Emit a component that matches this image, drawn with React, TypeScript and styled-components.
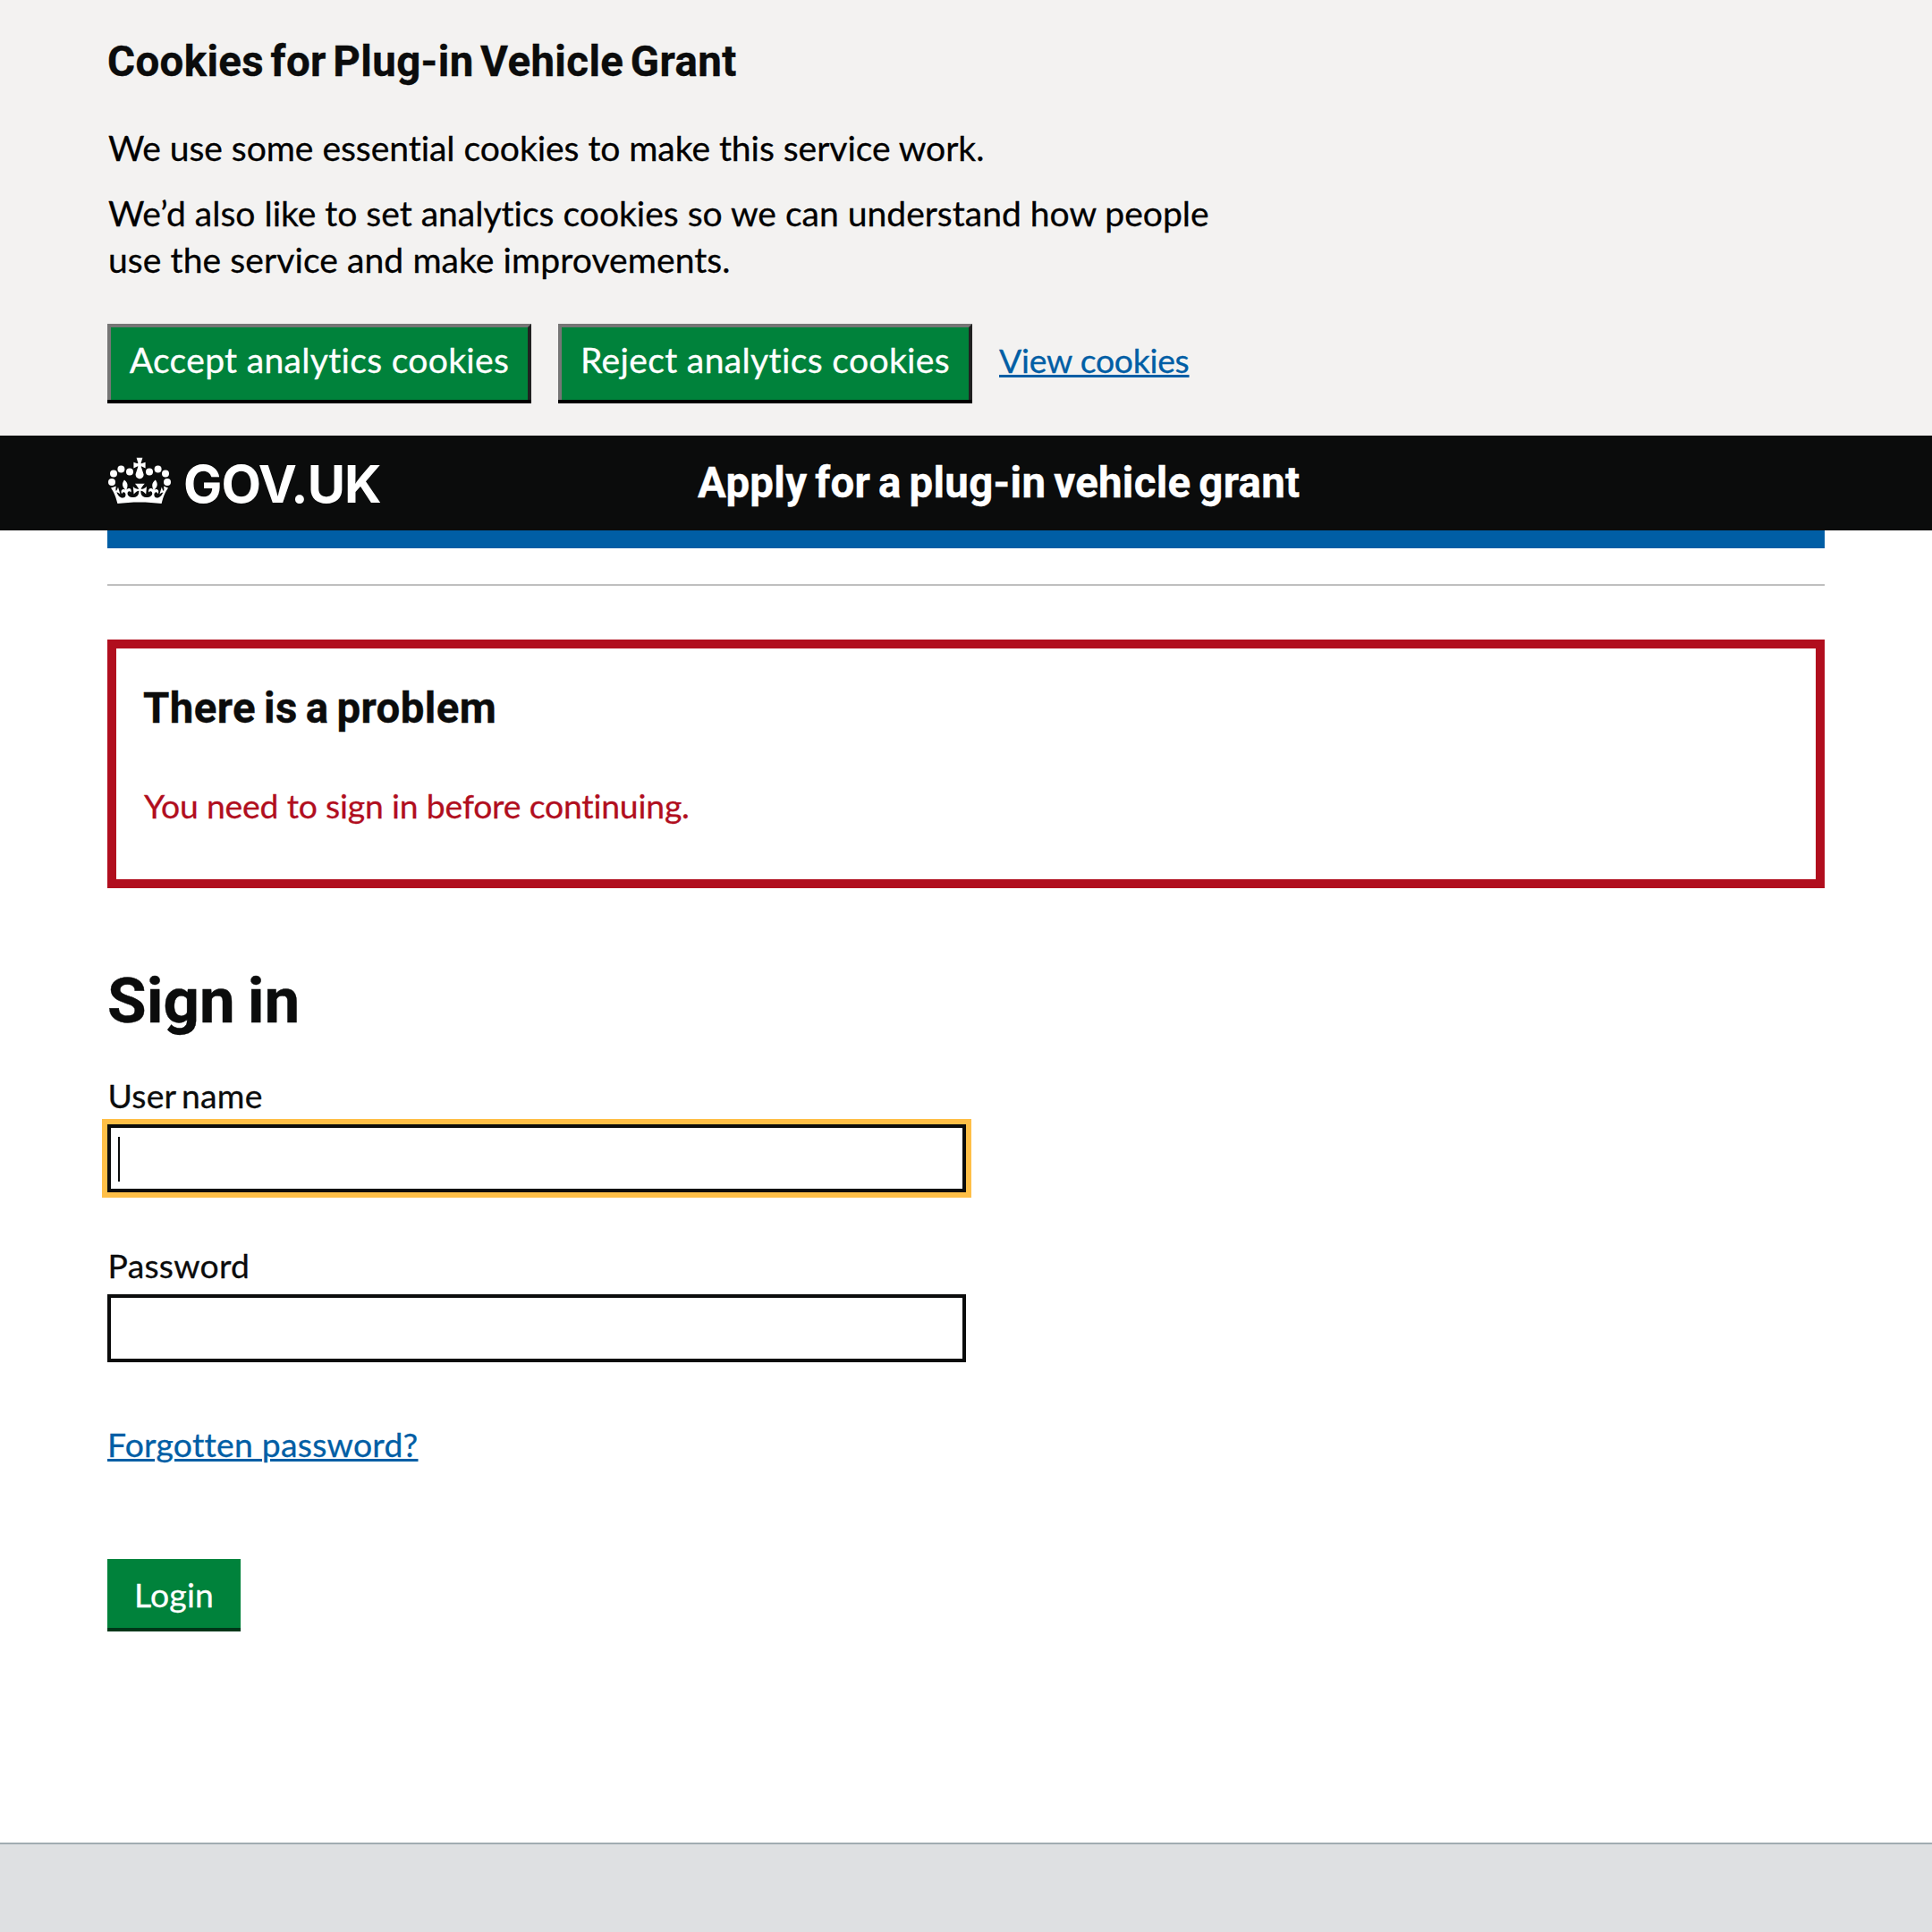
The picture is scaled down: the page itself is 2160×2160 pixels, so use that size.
import React from 'react';
import styled, { createGlobalStyle } from 'styled-components';

const ink = '#0b0c0c';
const blue = '#005ea5';
const green = '#00823b';
const red = '#b10e1e';

const GlobalStyle = createGlobalStyle`
  *, *::before, *::after { box-sizing: border-box; }
  body {
    margin: 0;
    background: #fff;
    color: ${ink};
    font-family: Lato, Arial, sans-serif;
    font-variant-ligatures: none;
  }
  h1, h2, p { margin: 0; }
`;

const Page = styled.div`
  display: flex;
  flex-direction: column;
  height: 2160px;
  overflow: hidden;
`;

const CookieBanner = styled.section`
  height: 487px;
  padding: 39px 120px 0;
  background: #f3f2f1;
`;

const Heading = styled.h2<{ $tracking: number; $wordGap: number }>`
  font: 700 47.4px/60px Roboto, sans-serif;
  letter-spacing: ${p => p.$tracking}px;
  word-spacing: ${p => p.$wordGap}px;
  -webkit-text-stroke: 0.4px currentColor;
`;

const CookieCopy = styled.div`
  display: flex;
  flex-direction: column;
  gap: 21px;
  width: 1270px;
  margin-top: 40px;
  padding-left: 1px;
  color: #000;
`;

const Paragraph = styled.p`
  font-size: 39.1px;
  line-height: 52px;
  -webkit-text-stroke: 0.3px currentColor;
`;

const Line = styled.span<{ $tracking: number }>`
  display: block;
  letter-spacing: ${p => p.$tracking}px;
`;

const CookieActions = styled.div`
  display: flex;
  align-items: flex-start;
  gap: 30px;
  margin-top: 46px;
`;

const CookieButton = styled.button<{ $width: number; $tracking: number }>`
  width: ${p => p.$width}px;
  height: 85px;
  padding: 0 0 9px;
  border: 4px solid;
  border-color: #767676 #212121 #000 #767676;
  border-bottom: 0;
  border-radius: 0;
  box-shadow: 0 4px 0 #000;
  background: ${green};
  color: #fff;
  font: 400 39.1px/52px Lato, sans-serif;
  letter-spacing: ${p => p.$tracking}px;
  white-space: nowrap;
  -webkit-text-stroke: 0.3px currentColor;
`;

const Link = styled.a<{ $tracking: number }>`
  color: ${blue};
  font-size: 37.3px;
  line-height: 51px;
  letter-spacing: ${p => p.$tracking}px;
  text-decoration: underline;
  text-decoration-thickness: 3px;
  text-underline-offset: 2px;
  -webkit-text-stroke: 0.3px currentColor;
`;

const ViewLink = styled(Link)`
  margin-top: 15px;
`;

const Header = styled.header`
  display: flex;
  align-items: flex-start;
  height: 106px;
  padding: 0 120px;
  background: ${ink};
  color: #fff;
`;

const Brand = styled.div`
  display: flex;
  gap: 13px;
  width: 660px;
  padding-top: 19px;
`;

const CrownSvg = styled.svg`
  flex: none;
  width: 72px;
  height: 52px;
  margin-top: 5px;
  fill: #fff;
`;

const BrandName = styled.span`
  font: 700 57.8px/70px Inter, sans-serif;
  letter-spacing: -0.95px;
`;

const ServiceName = styled(Heading)`
  margin-top: 23px;
`;

const Main = styled.main`
  flex: 1;
  margin: 0 120px;
`;

const BlueBar = styled.div`
  height: 20px;
  background: ${blue};
`;

const Divider = styled.div`
  height: 2px;
  margin-top: 40px;
  background: #bfbfbf;
`;

const ErrorSummary = styled.section`
  height: 278px;
  margin-top: 60px;
  padding: 37px 30px 0;
  border: 10px solid ${red};
`;

const ErrorText = styled.p`
  margin-top: 53px;
  padding-left: 1px;
  color: ${red};
  font-size: 37.3px;
  line-height: 51px;
  letter-spacing: -0.18px;
  -webkit-text-stroke: 0.3px currentColor;
`;

const Title = styled.h1`
  margin-top: 80px;
  font: 700 70.9px/91px Roboto, sans-serif;
  letter-spacing: 0px;
  word-spacing: -3.5px;
  -webkit-text-stroke: 0.4px currentColor;
`;

const Form = styled.form`
  display: flex;
  flex-direction: column;
  align-items: flex-start;
  padding-top: 35px;
`;

const Field = styled.div`
  display: flex;
  flex-direction: column;
  gap: 7px;
  width: 960px;
  margin-bottom: 56px;
`;

const Label = styled.label<{ $tracking: number; $wordGap?: number }>`
  font-size: 37.3px;
  line-height: 51px;
  letter-spacing: ${p => p.$tracking}px;
  word-spacing: ${p => p.$wordGap ?? 0}px;
  padding-left: 0.6px;
  -webkit-text-stroke: 0.3px currentColor;
`;

const Input = styled.div<{ $focused?: boolean }>`
  height: 76px;
  padding: 10px 8px;
  border: 4px solid ${ink};
  outline: ${p => (p.$focused ? '6px solid #ffbf47' : 'none')};
  background: #fff;
`;

const Caret = styled.div`
  width: 2px;
  height: 50px;
  background: ${ink};
`;

const ForgottenLink = styled(Link)`
  margin-top: 10px;
`;

const LoginButton = styled.button`
  width: 149px;
  height: 81px;
  margin-top: 103px;
  padding: 14px 0 12px 30px;
  border: 0;
  border-bottom: 4px solid #003618;
  background: ${green};
  color: #fff;
  font: 400 37.3px/51px Lato, sans-serif;
  letter-spacing: 0.224px;
  text-align: left;
  -webkit-text-stroke: 0.3px currentColor;
`;

const Footer = styled.footer`
  height: 100px;
  border-top: 2px solid #a1acb2;
  background: #dee0e2;
`;

const beads: [number, number][] = [
  [0.5, 18],
  [1.5, 13.2],
  [5.7, 10.8],
  [10.5, 12.2],
];

const Crown = () => (
  <CrownSvg viewBox="-2 4 36 26" aria-hidden="true">
    {beads.map(([x, y]) => (
      <React.Fragment key={x}>
        <circle cx={x} cy={y} r="2" />
        <circle cx={32 - x} cy={y} r="2" />
      </React.Fragment>
    ))}
    <path
      transform="translate(0 4.4)"
      d="M17 4.7l2.3 1.2V2.5l-2.3.7-.2-.2.9-3h-3.4l.9 3-.2.2c-.1.1-2.3-.7-2.3-.7v3.4L15 4.7c.1.1.1.2.2.2l-1.3 4c-.1.2-.1.4-.1.6 0 1.1.8 2 1.9 2.2h.7c1-.2 1.9-1.1 1.9-2.1 0-.2 0-.4-.1-.6l-1.3-4c-.1-.2 0-.2.1-.3"
    />
    <path d="M16 29.2c4.4 0 8.6.3 12.3.8 1.1-4.5 2.4-7 3.7-8.8l-2.5-.9c.2 1.3.3 1.9 0 2.7-.4-.4-.8-1.1-1.1-2.3l-1.2 4c.7-.5 1.3-.8 2-.9-1.1 2.5-2.6 3.1-3.5 3-1.1-.2-1.7-1.2-1.5-2.1.3-1.2 1.5-1.5 2.1-.1 1.1-2.3-.8-3-2-2.3 1.9-1.9 2.1-3.5.6-5.6-2.1 1.6-2.1 3.2-1.2 5.5-1.2-1.4-3.2-.6-2.5 1.6.9-1.4 2.1-.5 1.9.8-.2 1.1-1.7 2.1-3.5 1.9-2.7-.2-2.9-2.1-2.9-3.6.7-.1 1.9.5 2.9 1.9l.4-4.3c-1.1 1.1-2.1 1.4-3.2 1.4.4-1.2 2.1-3 2.1-3h-5.4s1.7 1.9 2.1 3c-1.1 0-2.1-.2-3.2-1.4l.4 4.3c1-1.4 2.2-2 2.9-1.9-.1 1.5-.2 3.4-2.9 3.6-1.9.2-3.4-.8-3.5-1.9-.2-1.3 1-2.2 1.9-.8.7-2.3-1.2-3-2.5-1.6.9-2.2.9-3.9-1.2-5.5-1.5 2-1.3 3.7.6 5.6-1.2-.7-3.1 0-2 2.3.6-1.4 1.8-1.1 2.1.1.2.9-.3 1.9-1.5 2.1-.9.2-2.4-.5-3.5-3 .6 0 1.2.3 2 .9l-1.2-4c-.3 1.1-.7 1.9-1.1 2.3-.3-.8-.2-1.4 0-2.7l-2.9.9C1.3 23 2.6 25.5 3.7 30c3.7-.5 7.9-.8 12.3-.8" />
  </CrownSvg>
);

export default function App() {
  return (
    <Page>
      <GlobalStyle />
      <CookieBanner>
        <Heading $tracking={0.4} $wordGap={-4.7}>Cookies for Plug-in Vehicle Grant</Heading>
        <CookieCopy>
          <Paragraph>
            <Line $tracking={-0.06}>We use some essential cookies to make this service work.</Line>
          </Paragraph>
          <Paragraph>
            <Line $tracking={-0.02}>We’d also like to set analytics cookies so we can understand how people</Line>
            <Line $tracking={0.06}>use the service and make improvements.</Line>
          </Paragraph>
        </CookieCopy>
        <CookieActions>
          <CookieButton $width={474} $tracking={0.3}>Accept analytics cookies</CookieButton>
          <CookieButton $width={463} $tracking={0.34}>Reject analytics cookies</CookieButton>
          <ViewLink $tracking={-0.23}>View cookies</ViewLink>
        </CookieActions>
      </CookieBanner>
      <Header>
        <Brand>
          <Crown />
          <BrandName>GOV.UK</BrandName>
        </Brand>
        <ServiceName $tracking={0.3} $wordGap={-3.2}>Apply for a plug-in vehicle grant</ServiceName>
      </Header>
      <Main>
        <BlueBar />
        <Divider />
        <ErrorSummary>
          <Heading $tracking={0.4} $wordGap={-3.2}>There is a problem</Heading>
          <ErrorText>You need to sign in before continuing.</ErrorText>
        </ErrorSummary>
        <Title>Sign in</Title>
        <Form>
          <Field>
            <Label $tracking={0.2} $wordGap={-3.2}>User name</Label>
            <Input $focused>
              <Caret />
            </Input>
          </Field>
          <Field>
            <Label $tracking={0.25}>Password</Label>
            <Input />
          </Field>
          <ForgottenLink $tracking={0.25}>Forgotten password?</ForgottenLink>
          <LoginButton type="button">Login</LoginButton>
        </Form>
      </Main>
      <Footer />
    </Page>
  );
}
